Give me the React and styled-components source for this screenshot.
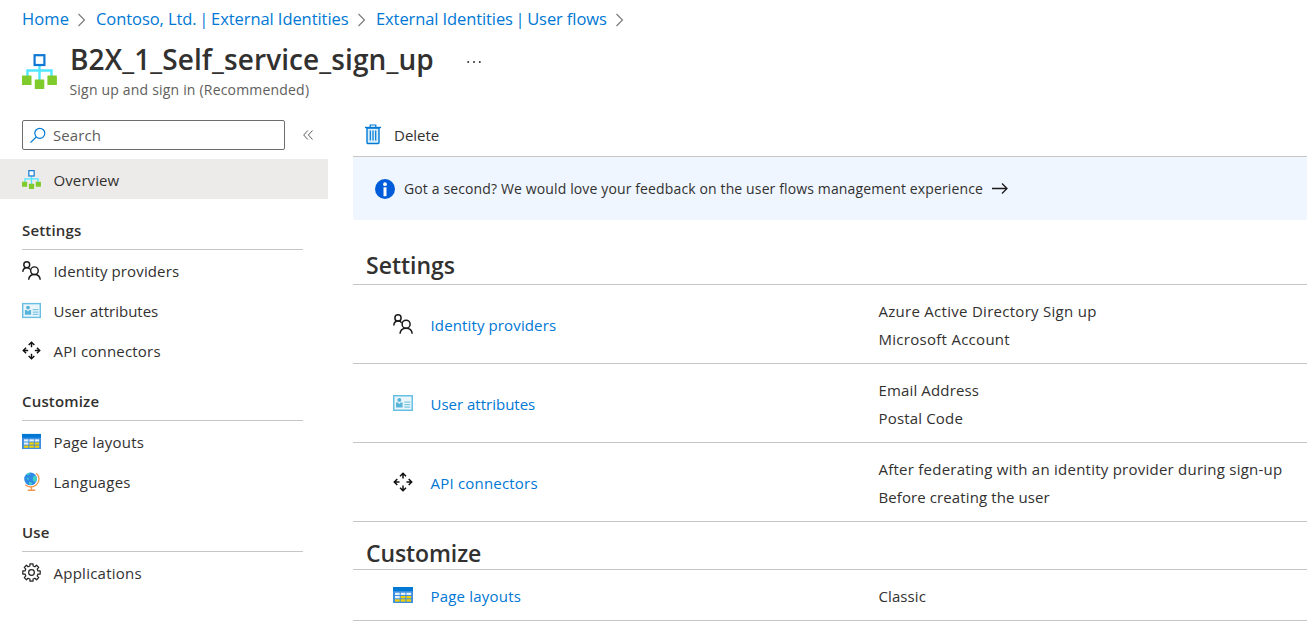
import React from "react";
import styled, { createGlobalStyle } from "styled-components";

const GlobalStyle = createGlobalStyle`
  *, *::before, *::after { box-sizing: border-box; }
  body { margin: 0; background: #fff; overflow: hidden; }
  #root { font-family: "Open Sans", "Noto Sans", sans-serif; font-size: 15px; color: #323130; }
  svg { display: block; flex: none; }
`;

const Page = styled.div`
  display: flex;
  flex-direction: column;
  width: 1307px;
  height: 637px;
  overflow: hidden;
  background: #fff;
`;

const Label = styled.span`
  white-space: nowrap;
  letter-spacing: ${(p) => p.$track || 0}px;
`;

const Breadcrumbs = styled.nav`
  display: flex;
  align-items: center;
  height: 38px;
  padding: 0 0 1px 22px;
  font-size: 16.5px;
  color: #0078d4;
`;

const Crumb = styled(Label)`
  width: ${(p) => p.$width}px;
`;

const Pipe = styled.span`
  margin: 0 -1.5px;
`;

const CrumbArrow = styled.svg`
  margin: 2px 9px 0 8px;
`;

const Header = styled.header`
  display: flex;
  height: 82px;
  padding: 16px 0 0 22px;
`;

const TitleBlock = styled.div`
  display: flex;
  flex-direction: column;
  width: 364px;
  margin: -14px 0 0 13px;
`;

const Title = styled.h1`
  margin: 0;
  font-size: 28px;
  font-weight: 600;
  line-height: 38px;
  white-space: nowrap;
  letter-spacing: ${(p) => p.$track}px;
`;

const Subtitle = styled.div`
  font-size: 14px;
  line-height: 20px;
  color: #605e5c;
  margin: 2px 0 0 -0.5px;
  white-space: nowrap;
  letter-spacing: ${(p) => p.$track}px;
`;

const MoreDots = styled.svg`
  margin: 6px 0 0 32.5px;
`;

const Body = styled.div`
  display: flex;
  flex: 1;
`;

const Sidebar = styled.aside`
  width: 328px;
  margin-right: 25px;
  flex: none;
`;

const SearchRow = styled.div`
  display: flex;
  align-items: center;
  height: 30px;
  margin: 0 0 9px 22px;
`;

const SearchBox = styled.div`
  display: flex;
  align-items: center;
  gap: 7px;
  width: 263px;
  height: 30px;
  padding-left: 6px;
  border: 1px solid #6e6d6c;
  border-radius: 2px;
  color: #605e5c;
`;

const Collapse = styled.svg`
  margin-left: 18px;
`;

const NavItem = styled.div`
  display: flex;
  align-items: center;
  gap: 12.5px;
  height: 40px;
  padding: 2px 0 0 22px;
  background: ${(p) => (p.$active ? "#edebe9" : "transparent")};
  svg { margin-top: -2px; }
`;

const NavHeading = styled.div`
  width: 281px;
  height: 51px;
  margin-left: 22px;
  padding-top: 20px;
  border-bottom: 1px solid #c8c6c4;
  font-weight: 600;
  line-height: 22px;
  letter-spacing: 0.17px;
`;

const Main = styled.main`
  flex: 1;
`;

const Toolbar = styled.div`
  display: flex;
  align-items: center;
  gap: 12px;
  height: 37px;
  padding: 0 0 7px 12px;
  border-bottom: 1px solid #c8c6c4;
  svg { margin-top: -1px; }
`;

const Banner = styled.div`
  display: flex;
  align-items: center;
  height: 63px;
  padding-left: 22px;
  background: #eff6ff;
  border-radius: 2px;
  font-size: 14px;
`;

const BannerText = styled(Label)`
  width: 588px;
  margin-left: 9px;
`;

const SectionHeading = styled.h2`
  display: flex;
  align-items: flex-end;
  height: ${(p) => p.$height}px;
  margin: 0;
  padding: 0 0 ${(p) => p.$bottom}px 13px;
  border-bottom: 1px solid #c8c6c4;
  font-size: 23px;
  font-weight: 600;
  line-height: 30px;
  letter-spacing: ${(p) => p.$track || 0}px;
`;

const SettingRow = styled.div`
  display: grid;
  grid-template-columns: 20px 1fr 428.5px;
  column-gap: 17.5px;
  align-items: center;
  height: ${(p) => p.$height || 79}px;
  padding: 2px 0 0 40px;
  border-bottom: 1px solid #c8c6c4;
  svg { margin-top: -3px; }
`;

const RowLink = styled.a`
  color: #0078d4;
  text-decoration: none;
`;

const Values = styled.div`
  display: flex;
  flex-direction: column;
  line-height: 28px;
`;

function FlowIcon({ size }) {
  return (
    <svg width={size} height={size} viewBox="0 0 35 35">
      <path d="M5.5 22v-5.5h24V22M17.5 11v16" fill="none" stroke="#50e6ff" strokeWidth="2.4" />
      <rect x="12.6" y="1.2" width="9.8" height="9.8" fill="#fff" stroke="#0f78d4" strokeWidth="2.2" />
      <g fill="#7fcb2c">
        <rect x="0" y="21.5" width="9.5" height="9.5" rx=".6" />
        <rect x="12.8" y="25.5" width="9.5" height="9.5" rx=".6" />
        <rect x="25.4" y="21.5" width="9.5" height="9.5" rx=".6" />
      </g>
    </svg>
  );
}

function PeopleIcon({ size }) {
  return (
    <svg width={size} height={size} viewBox="0 0 20 20" fill="none" stroke="#1b1a19" strokeWidth="1.5">
      <circle cx="5" cy="3.9" r="3.1" />
      <path d="M.8 11.5C1 8.700 2.800 7.100 5 7.100c1.500 0 2.800.7 3.600 1.700" />
      <circle cx="13.100" cy="10.200" r="4" />
      <path d="M7 19.800c.3-3.500 2.800-5.600 6.100-5.600s5.800 2.100 6.100 5.600" />
    </svg>
  );
}

function CardIcon({ size }) {
  return (
    <svg width={size} height={size} viewBox="0 0 20 20">
      <rect x=".75" y="2.750" width="18.500" height="14.500" fill="#eaf6fb" stroke="#69bfe2" strokeWidth="1.500" />
      <circle cx="6.300" cy="6.900" r="2" fill="#59b4d9" />
      <path d="M3 9.500h2l1.300 1.600 1.300-1.600h2V14.500H3z" fill="#59b4d9" />
      <path d="M11.300 9.200h6M11.300 11.700h6M11.300 14.200h6" stroke="#7fc8e4" strokeWidth="1.300" />
    </svg>
  );
}

function ConnectorIcon({ size }) {
  return (
    <svg width={size} height={size} viewBox="0 0 20 20" fill="none" stroke="#111" strokeWidth="1.500">
      <path d="M10 1.500v5M7 4.300l3-3 3 3M10 18.500v-5M7 15.700l3 3 3-3M1.500 10h5M4.300 7l-3 3 3 3M18.500 10h-5M15.700 7l3 3-3 3" />
    </svg>
  );
}

function TableIcon({ size }) {
  return (
    <svg width={size} height={size} viewBox="0 0 20 20">
      <rect x="0" y="2" width="20" height="16" rx=".6" fill="#3f8fe0" />
      <rect x="0" y="2" width="20" height="4" fill="#0078d4" />
      <g fill="#e6f1fb">
        <rect x="2" y="7.700" width="4.700" height="2.300" />
        <rect x="7.700" y="7.700" width="4.700" height="2.300" />
        <rect x="13.400" y="7.700" width="4.700" height="2.300" />
        <rect x="2" y="11" width="4.700" height="2.300" />
      </g>
      <g fill="#f5d000">
        <rect x="7.700" y="11" width="4.700" height="2.300" />
        <rect x="13.400" y="11" width="4.700" height="2.300" />
        <rect x="2" y="14.300" width="4.700" height="2.300" />
        <rect x="7.700" y="14.300" width="4.700" height="2.300" />
        <rect x="13.400" y="14.300" width="4.700" height="2.300" />
      </g>
    </svg>
  );
}

function GlobeIcon({ size }) {
  return (
    <svg width={size} height={size} viewBox="0 0 20 20">
      <path d="M15 1.200c3.800 3.300 3.800 9 .2 12.300-3.300 3-8.300 3-11.800 0M10 15.500v3.500" fill="none" stroke="#f79a4b" strokeWidth="1.400" />
      <path d="M6 19.200h8" stroke="#f28a35" strokeWidth="1.400" />
      <circle cx="9" cy="7.300" r="6.700" fill="#2f8be6" />
      <path d="M5 2.200C6.200 1.100 7.400.7 8.500.7L8 2.400 6 3.500zM12 4.500l2.500-.4c.8 1 1.200 2.100 1.200 3.300l-1.700 3-2.200-.8-.5-2.500zM4.500 7l1.500-.8 1.500.8-.8 1.200zM7.500 10.300l2.500.7.800 1.600-2 1.200-1.500-1.300z" fill="#3fd3c2" />
    </svg>
  );
}

function GearIcon({ size }) {
  const teeth = [];
  for (let i = 0; i < 8; i++) {
    const at = (radius, degrees) => {
      const a = ((i * 45 + degrees - 90) * Math.PI) / 180;
      return `${(10 + radius * Math.cos(a)).toFixed(2)} ${(10 + radius * Math.sin(a)).toFixed(2)}`;
    };
    teeth.push(at(7, -14), at(9.3, -10), at(9.3, 10), at(7, 14));
  }
  return (
    <svg width={size} height={size} viewBox="0 0 20 20" fill="none" stroke="#252423" strokeWidth="1.300">
      <path d={`M${teeth.join("L")}Z`} strokeLinejoin="round" />
      <circle cx="10" cy="10" r="3" />
    </svg>
  );
}

function SearchIcon() {
  return (
    <svg width="17" height="17" viewBox="0 0 17 17" fill="none" stroke="#0078d4" strokeWidth="1.200">
      <circle cx="10.800" cy="6.300" r="5" />
      <path d="M7.200 10L1.500 15.700" />
    </svg>
  );
}

function TrashIcon() {
  return (
    <svg width="17" height="21" viewBox="0 0 17 21" fill="none" stroke="#0078d4">
      <path d="M2 4h12v14.500a1 1 0 0 1-1 1H3a1 1 0 0 1-1-1z" fill="#d8effb" strokeWidth="1.400" />
      <path d="M0 3.500h16" strokeWidth="1.400" />
      <path d="M5.200 3V1h5.600v2" strokeWidth="1.200" />
      <path d="M5.300 6.500v10M8 6.500v10M10.700 6.500v10" strokeWidth="1.200" />
    </svg>
  );
}

function InfoIcon() {
  return (
    <svg width="20" height="20" viewBox="0 0 20 20">
      <circle cx="10" cy="10" r="10" fill="#015cda" />
      <circle cx="10" cy="5.200" r="1.900" fill="#fff" />
      <rect x="8.500" y="8.300" width="3" height="8.900" fill="#fff" />
    </svg>
  );
}

function ArrowIcon() {
  return (
    <svg width="16" height="12" viewBox="0 0 16 12" fill="none" stroke="#1b1a19" strokeWidth="1.300">
      <path d="M0 5.500h15M10 .5l5 5-5 5" />
    </svg>
  );
}

function Chevron() {
  return (
    <CrumbArrow width="10" height="14" viewBox="0 0 10 14" fill="none" stroke="#797775" strokeWidth="1.100">
      <path d="M1.500 1l6 6-6 6" />
    </CrumbArrow>
  );
}

const crumbs = [
  { text: "Home", width: 47, track: 0.1 },
  { text: "Contoso, Ltd.", detail: "External Identities", width: 253, track: -0.07 },
  { text: "External Identities", detail: "User flows", width: 231, track: -0.1 },
];

const navGroups = [
  {
    heading: "Settings",
    items: [
      { text: "Identity providers", Icon: PeopleIcon, track: 0.13 },
      { text: "User attributes", Icon: CardIcon, track: 0 },
      { text: "API connectors", Icon: ConnectorIcon, track: 0.2 },
    ],
  },
  {
    heading: "Customize",
    items: [
      { text: "Page layouts", Icon: TableIcon, track: 0.2 },
      { text: "Languages", Icon: GlobeIcon, track: 0.28 },
    ],
  },
  {
    heading: "Use",
    items: [{ text: "Applications", Icon: GearIcon, track: 0.25 }],
  },
];

const settingRows = [
  {
    text: "Identity providers",
    Icon: PeopleIcon,
    track: 0.13,
    values: [["Azure Active Directory Sign up", 0.28], ["Microsoft Account", 0.28]],
  },
  { text: "User attributes", Icon: CardIcon, track: 0, values: [["Email Address", 0.14], ["Postal Code", 0.17]] },
  {
    text: "API connectors",
    Icon: ConnectorIcon,
    track: 0.2,
    values: [["After federating with an identity provider during sign-up", 0.24], ["Before creating the user", 0.1]],
  },
];

const customizeRows = [{ text: "Page layouts", Icon: TableIcon, track: 0.2, height: 51, values: [["Classic", 0.1]] }];

function Rows({ rows }) {
  return rows.map(({ text, Icon, track, height, values }) => (
    <SettingRow key={text} $height={height}>
      <Icon size={20} />
      <RowLink>
        <Label $track={track}>{text}</Label>
      </RowLink>
      <Values>
        {values.map(([value, spacing]) => (
          <Label key={value} $track={spacing}>{value}</Label>
        ))}
      </Values>
    </SettingRow>
  ));
}

export default function App() {
  return (
    <Page>
      <GlobalStyle />
      <Breadcrumbs>
        {crumbs.map(({ text, detail, width, track }) => (
          <React.Fragment key={text}>
            <Crumb $width={width} $track={track}>
              {text}
              {detail && <> <Pipe>|</Pipe> {detail}</>}
            </Crumb>
            <Chevron />
          </React.Fragment>
        ))}
      </Breadcrumbs>
      <Header>
        <FlowIcon size={35} />
        <TitleBlock>
          <Title $track={0.09}>B2X_1_Self_service_sign_up</Title>
          <Subtitle $track={0.19}>Sign up and sign in (Recommended)</Subtitle>
        </TitleBlock>
        <MoreDots width="14" height="4" viewBox="0 0 14 4" fill="#323130">
          <circle cx="1.200" cy="2" r="1" />
          <circle cx="7" cy="2" r="1" />
          <circle cx="12.800" cy="2" r="1" />
        </MoreDots>
      </Header>
      <Body>
        <Sidebar>
          <SearchRow>
            <SearchBox>
              <SearchIcon />
              <Label $track={0.1}>Search</Label>
            </SearchBox>
            <Collapse width="10" height="10" viewBox="0 0 10 10" fill="none" stroke="#605e5c" strokeWidth="1">
              <path d="M4.800.5L.7 5l4.100 4.500M9.500.5L5.400 5l4.100 4.500" />
            </Collapse>
          </SearchRow>
          <NavItem $active>
            <FlowIcon size={19} />
            <Label $track={0.1}>Overview</Label>
          </NavItem>
          {navGroups.map(({ heading, items }) => (
            <React.Fragment key={heading}>
              <NavHeading>{heading}</NavHeading>
              {items.map(({ text, Icon, track }) => (
                <NavItem key={text}>
                  <Icon size={19} />
                  <Label $track={track}>{text}</Label>
                </NavItem>
              ))}
            </React.Fragment>
          ))}
        </Sidebar>
        <Main>
          <Toolbar>
            <TrashIcon />
            <Label>Delete</Label>
          </Toolbar>
          <Banner>
            <InfoIcon />
            <BannerText $track={0.13}>Got a second? We would love your feedback on the user flows management experience</BannerText>
            <ArrowIcon />
          </Banner>
          <SectionHeading $height={65} $bottom={4}>Settings</SectionHeading>
          <Rows rows={settingRows} />
          <SectionHeading $height={48} $bottom={1} $track={-0.1}>Customize</SectionHeading>
          <Rows rows={customizeRows} />
        </Main>
      </Body>
    </Page>
  );
}
